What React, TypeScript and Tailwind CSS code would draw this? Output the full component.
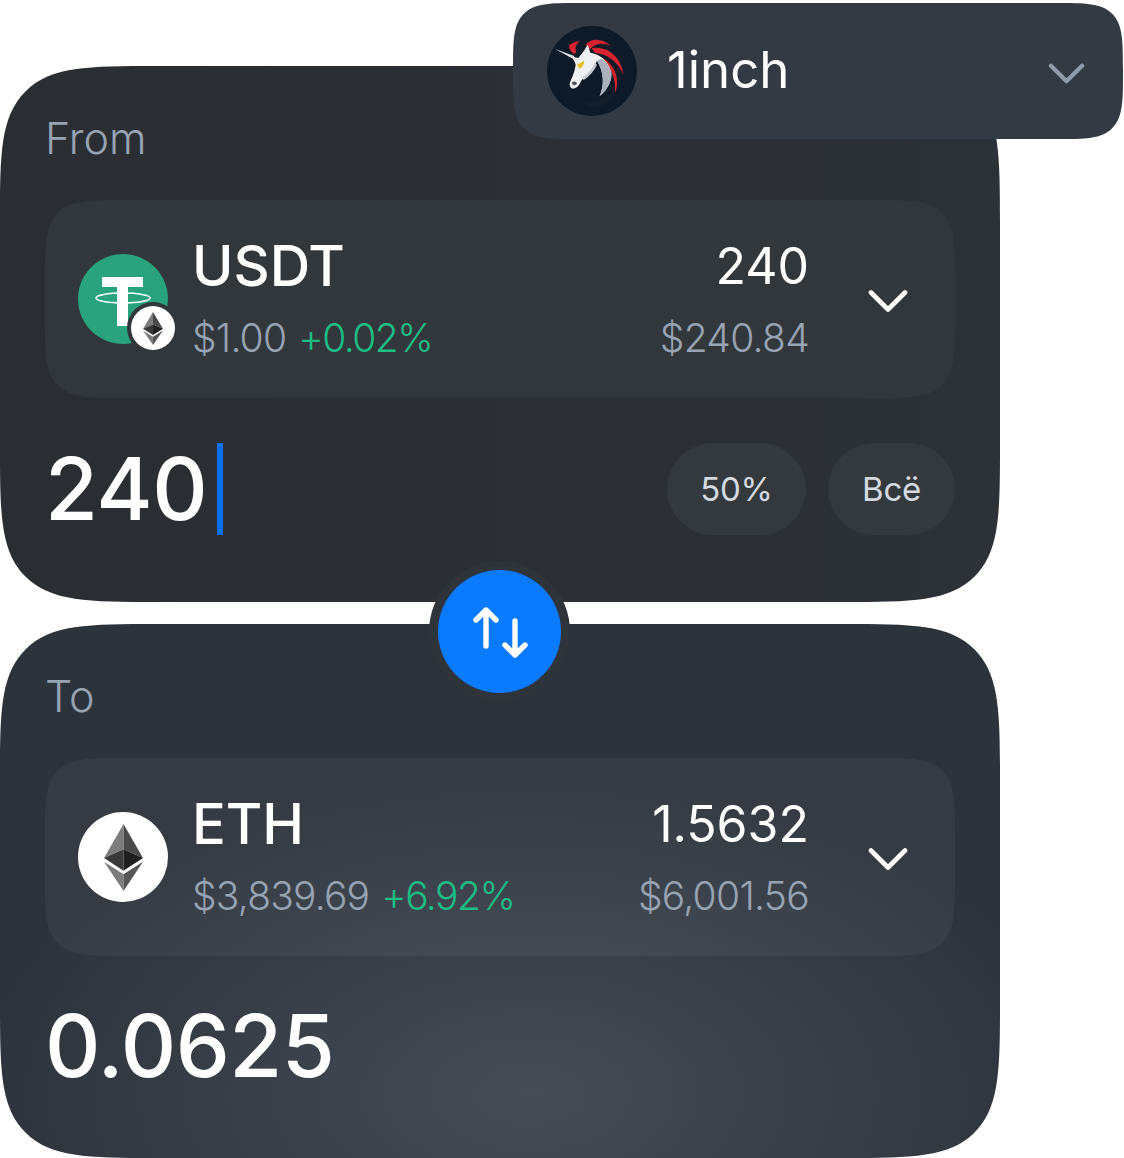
import type { ReactNode } from "react";

function Chevron({ className }: { className: string }) {
  return (
    <svg viewBox="0 0 40 24" fill="none" stroke="currentColor" strokeWidth="4.6" strokeLinecap="round" strokeLinejoin="round" className={className}>
      <path d="M3 3 L20 20 L37 3" />
    </svg>
  );
}

function EthGlyph({ className }: { className: string }) {
  return (
    <svg viewBox="0 0 66 112" preserveAspectRatio="none" className={className}>
      <path d="M33 0 L33 42 L0 57 Z" fill="#7d7d7d" />
      <path d="M33 0 L66 57 L33 42 Z" fill="#4a4a4a" />
      <path d="M33 42 L0 57 L33 78 Z" fill="#3a3a3a" />
      <path d="M33 42 L66 57 L33 78 Z" fill="#1f1f1f" />
      <path d="M0 63 L33 84 L33 112 Z" fill="#7d7d7d" />
      <path d="M66 63 L33 84 L33 112 Z" fill="#565656" />
    </svg>
  );
}

function TetherLogo() {
  return (
    <div className="relative w-[90px] h-[90px] shrink-0">
      <svg viewBox="0 0 90 90" className="w-[90px] h-[90px]">
        <circle cx="45" cy="45" r="45" fill="#29a37c" />
        <path d="M24 23 H65 V33 H50 V72 H39 V33 H24 Z" fill="#fff" />
        <ellipse cx="45" cy="44" rx="27" ry="5" fill="none" stroke="#fff" strokeWidth="1.6" />
      </svg>
      <div className="absolute left-[49px] top-[48px] w-[52px] h-[52px] rounded-full bg-[#32373b] flex items-center justify-center">
        <div className="w-[44px] h-[44px] rounded-full bg-white flex items-center justify-center">
          <EthGlyph className="w-[20px] h-[33px]" />
        </div>
      </div>
    </div>
  );
}

function EthLogo() {
  return (
    <div className="w-[90px] h-[90px] rounded-full bg-white shrink-0 flex items-center justify-center">
      <EthGlyph className="w-[39px] h-[67px]" />
    </div>
  );
}

function UnicornLogo() {
  return (
    <svg viewBox="6 6 270 270" className="w-[90px] h-[90px] shrink-0">
      <circle cx="141" cy="141" r="135" fill="#0f1a29" />
      <path d="M110 232 C165 240 205 210 222 170 C222 220 170 262 125 248 Z" fill="#141d2a" />
      <path d="M30 75 L88 96 L84 104 Z" fill="#e3e6ec" />
      <path d="M88 90 C72 80 70 65 74 62 C82 56 95 52 106 50 C94 58 88 72 94 84 Z" fill="#d9232e" />
      <path d="M122 62 C140 42 170 42 198 66 C172 54 150 58 134 76 Z" fill="#d9232e" />
      <path d="M140 72 C190 64 228 100 236 152 C216 110 186 90 150 86 Z" fill="#d9232e" />
      <path d="M166 100 C206 114 228 165 210 207 C214 170 200 130 174 112 Z" fill="#d9232e" />
      <path d="M74 180 C76 168 88 152 92 122 C90 112 84 106 82 98 L100 102 C110 90 120 76 128 62 C132 72 134 80 136 86 C164 90 190 112 198 142 C204 166 188 198 164 216 C178 184 178 146 156 110 C146 134 128 152 110 168 C104 180 100 192 84 194 C78 194 74 188 74 180 Z" fill="#eef0f4" />
      <path d="M156 110 C178 146 178 184 164 216 C188 198 204 166 198 142 C192 124 182 112 170 104 Z" fill="#aab1bd" />
      <path d="M150 118 C140 138 126 150 112 162 L116 168 C132 158 148 140 156 122 Z" fill="#c3c8d1" />
      <path d="M96 122 L118 110 C118 120 112 130 104 134 Z" fill="#e8bf1a" />
      <path d="M80 176 C86 170 94 172 96 178 C92 186 84 186 80 176 Z" fill="#4c5361" />
    </svg>
  );
}

function TokenRow({ logo, name, price, change, amount, value, rowClass }: { logo: ReactNode; name: string; price: string; change: string; amount: string; value: string; rowClass: string }) {
  return (
    <div className={`h-[198px] rounded-[80px] [corner-shape:squircle] pl-[33px] pr-[47px] flex items-center ${rowClass}`}>
      {logo}
      <div className="ml-[24px] flex-1 flex flex-col -mt-[2px]">
        <div className="text-[56px] leading-[62px] font-[450] text-white">{name}</div>
        <div className="text-[39px] leading-[48px] mt-[17px] font-[350] text-[#98a3b3] flex gap-[12px] tracking-[-0.8px]">
          <span>{price}</span>
          <span className="text-[#1bbd85] tracking-[-1.5px]">{change}</span>
        </div>
      </div>
      <div className="flex flex-col items-end -mt-[2px]">
        <div className="text-[50px] leading-[62px] text-white">{amount}</div>
        <div className="text-[39px] leading-[48px] mt-[17px] font-[350] text-[#98a3b3] tracking-[-0.7px]">{value}</div>
      </div>
      <Chevron className="ml-[59px] w-[40px] h-[25px] text-white mt-[4px]" />
    </div>
  );
}

export default function App() {
  return (
    <div className="relative w-[1124px] h-[1158px] bg-white overflow-hidden [font-family:Inter,sans-serif]">
      <div className="pt-[66px] w-[1000px] flex flex-col gap-[22px]">
        <section className="h-[536px] rounded-[160px] [corner-shape:squircle] bg-gradient-to-r from-[#2a2e32] to-[#2d3138] px-[45px] pt-[45px]">
          <div className="text-[43px] leading-[54px] font-[350] text-[#98a3b3]">From</div>
          <div className="mt-[35px]">
            <TokenRow rowClass="bg-[#32373b]" logo={<TetherLogo />} name="USDT" price="$1.00" change="+0.02%" amount="240" value="$240.84" />
          </div>
          <div className="mt-[45px] flex items-center">
            <div className="text-[86px] leading-[92px] font-[450] text-white tracking-[-0.4px]">240</div>
            <div className="ml-[10px] w-[6px] h-[92px] bg-[#0a6fe8]"></div>
            <div className="ml-auto flex gap-[22px]">
              <div className="w-[139px] h-[92px] rounded-full bg-[#34393d] flex items-center justify-center text-[33px] text-[#d5dae1] tracking-[-0.3px] pt-[2px]">50%</div>
              <div className="w-[127px] h-[92px] rounded-full bg-[#34393d] flex items-center justify-center text-[33px] text-[#d5dae1] tracking-[-0.3px] pt-[2px]">Всё</div>
            </div>
          </div>
        </section>
        <section className="h-[534px] rounded-[160px] [corner-shape:squircle] bg-[radial-gradient(ellipse_560px_320px_at_530px_470px,#454c56_0%,#2d333b_100%)] px-[45px] pt-[45px]">
          <div className="text-[43px] leading-[54px] font-[350] text-[#98a3b3]">To</div>
          <div className="mt-[35px]">
            <TokenRow rowClass="bg-white/[0.045]" logo={<EthLogo />} name="ETH" price="$3,839.69" change="+6.92%" amount="1.5632" value="$6,001.56" />
          </div>
          <div className="mt-[44px] text-[86px] leading-[92px] font-[450] text-white tracking-[-0.6px]">0.0625</div>
        </section>
      </div>

      <div className="absolute left-[513px] top-[3px] w-[610px] h-[136px] rounded-[72px] [corner-shape:squircle] bg-[#343a44] pl-[34px] pr-[38px] flex items-center">
        <UnicornLogo />
        <div className="ml-[30px] flex-1 text-[51px] leading-[62px] text-white -mt-[3px]">1inch</div>
        <Chevron className="w-[37px] h-[22px] text-[#8f9bab] mt-[5px]" />
      </div>

      <div className="absolute left-[429px] top-[561px] w-[141px] h-[141px] rounded-full bg-[#2f343b] flex items-center justify-center">
        <div className="w-[123px] h-[123px] rounded-full bg-[#0a7aff] flex items-center justify-center">
          <svg viewBox="0 0 58 54" fill="none" stroke="white" strokeWidth="5.4" strokeLinecap="round" strokeLinejoin="round" className="w-[58px] h-[54px]">
            <path d="M15 41 V5 M5 15 L15 5 L25 15" />
            <path d="M44 16 V50 M34 40 L44 50 L54 40" />
          </svg>
        </div>
      </div>
    </div>
  );
}
